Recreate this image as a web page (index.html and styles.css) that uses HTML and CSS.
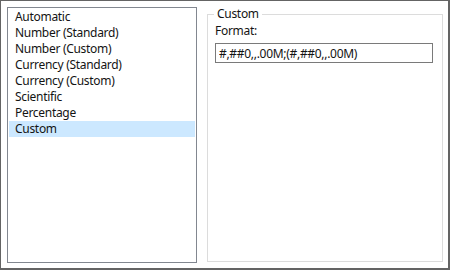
FILE: index.html
```
<!DOCTYPE html>
<html lang="en">
<head>
    <meta charset="UTF-8">
    <meta name="viewport" content="width=device-width, initial-scale=1.0">
    <title>Number Format</title>
    <link rel="stylesheet" href="styles.css">
</head>
<body>
    <div class="FormatDialog">
        <ul class="CategoryList">
            <li class="category-item">Automatic</li>
            <li class="category-item">Number (Standard)</li>
            <li class="category-item">Number (Custom)</li>
            <li class="category-item">Currency (Standard)</li>
            <li class="category-item">Currency (Custom)</li>
            <li class="category-item">Scientific</li>
            <li class="category-item">Percentage</li>
            <li class="category-item selected">Custom</li>
        </ul>

        <fieldset class="CustomGroup">
            <legend class="groupTitle">Custom</legend>
            <label for="formatField" class="formatLabel">Format:</label>
            <input type="text" id="formatField" class="formatField" value="#,##0,,.00M;(#,##0,,.00M)" />
        </fieldset>
    </div>
</body>
</html>
```

FILE: styles.css
```
body {
    margin: 0;
    font-family: 'Noto Sans', 'Liberation Sans', sans-serif;
    font-size: 12px;
    letter-spacing: -0.3px; /* closer to Segoe UI widths */
    color: #141414;
    background: #ffffff;
}

.FormatDialog {
    width: 450px;
    height: 270px;
    box-sizing: border-box;
    display: flex;
    gap: 10px;
    padding: 6px 0 0 6px;
    background: #ffffff;
    border-top: 1px solid #646464;
    border-left: 1px solid #646464;
    border-right: 2px solid #646464;
    border-bottom: 2px solid #646464;
}

.CategoryList {
    list-style: none;
    margin: 0;
    width: 190px;
    height: 256px;
    box-sizing: border-box;
    padding: 1px;
    border: 1px solid #828790;
}

.category-item {
    height: 16px;
    line-height: 16px;
    padding-left: 6px;
    white-space: nowrap;
}

.category-item.selected {
    background: #cce8ff; /* selection highlight */
}

.CustomGroup {
    margin: 0;
    width: 236px;
    height: 255px;
    box-sizing: border-box;
    padding: 0 8px 0 7px;
    border: 1px solid #dcdcdc;
    display: flex;
    flex-direction: column;
    align-items: flex-start;
}

.groupTitle {
    margin-left: -1px;
    padding: 0 3px 0 3px;
    line-height: 14px;
}

.formatLabel {
    display: block;
    margin-top: 2px;
    line-height: 16px;
}

.formatField {
    margin: 4px 0 0 0;
    width: 218px;
    height: 20px;
    box-sizing: border-box;
    padding: 0 3px;
    border: 1px solid #7a7a7a;
    border-radius: 0;
    font-family: inherit;
    font-size: 12px;
    letter-spacing: inherit;
    color: #141414;
    outline: none;
}
```
